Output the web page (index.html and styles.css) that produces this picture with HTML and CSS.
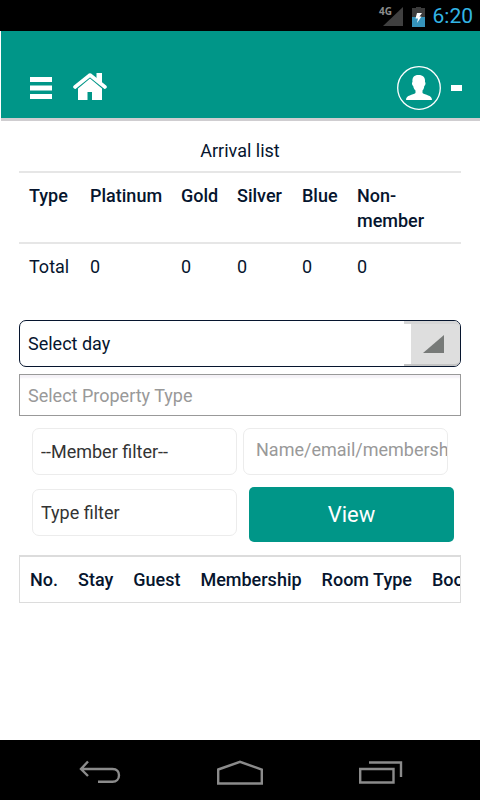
FILE: index.html
```html
<!DOCTYPE html>
<html lang="en">
<head>
<meta charset="utf-8">
<meta name="viewport" content="width=device-width, initial-scale=1">
<title>Arrival list</title>
<link rel="stylesheet" href="styles.css">
</head>
<body>
<div class="status">
  <svg class="signal" width="24" height="24" viewBox="0 0 24 24" aria-hidden="true"><path d="M24 2V21H4z" fill="#404040"/></svg>
  <span class="network">4G</span>
  <svg class="battery" width="13" height="20" viewBox="0 0 13 20" aria-hidden="true"><path d="M0 1H4V0H9V1H13V20H0z" fill="#3c3c3c"/><path d="M0 10H13V20H0z" fill="#3593bb"/><path d="M5 6H10L7.500 9.500H9.500L5 16L6 11.500H3.500z" fill="#fff"/></svg>
  <time class="clock">6:20</time>
</div>
<header class="topbar">
  <nav class="nav">
    <button class="icon-button" aria-label="Menu"><svg width="22" height="24" viewBox="0 0 22 24"><path d="M0 2H22V7H0zM0 10.500H22V15.500H0zM0 19H22V24H0z" fill="#fff"/></svg></button>
    <a class="icon-button" href="#" aria-label="Home"><svg width="34" height="28" viewBox="0 0 34 28"><path d="M2 14L17 2L32 14" fill="none" stroke="#fff" stroke-width="3.600" stroke-linecap="round" stroke-linejoin="round"/><path d="M23.500 0H29V11L23.500 7z" fill="#fff"/><path d="M17 5.500L29 15.500V27H19V19H14.500V27H5V15.500z" fill="#fff"/></svg></a>
  </nav>
  <button class="icon-button account" aria-label="Account"><svg width="44" height="44" viewBox="0 0 44 44"><circle cx="22" cy="22" r="21.300" fill="none" stroke="#fff" stroke-width="1.300"/><path d="M21.500 9C17 9 15 11.500 15.500 16C14.500 16.500 15 19.500 16.200 20C16.500 22 17.500 23.500 18.500 24.500V27C16 29 9 29 9 34H35C35 29 28 29 25.500 27V24.500C26.500 23.500 27 22 27.300 20C28.500 19.500 29 16.500 28 16C28.500 11.500 26 9 21.500 9z" fill="#fff"/></svg><span class="dash"></span></button>
</header>
<main class="content">
  <table class="totals">
    <caption>Arrival list</caption>
    <colgroup><col class="c-type"><col class="c-platinum"><col class="c-gold"><col class="c-silver"><col class="c-blue"><col></colgroup>
    <thead><tr><th>Type</th><th>Platinum</th><th>Gold</th><th>Silver</th><th>Blue</th><th>Non-<br>member</th></tr></thead>
    <tbody><tr><td>Total</td><td>0</td><td>0</td><td>0</td><td>0</td><td>0</td></tr></tbody>
  </table>
  <form class="search">
    <div class="day-wrap">
      <select class="field day" aria-label="Day"><option>Select day</option></select>
      <span class="day-arrow"><svg width="22" height="18" viewBox="0 0 22 18" aria-hidden="true"><path d="M21 0V18H0z" fill="#777a78"/></svg></span>
    </div>
    <input class="field property" type="text" placeholder="Select Property Type" aria-label="Property type">
    <div class="filters">
      <select class="field filter" aria-label="Member filter"><option>--Member filter--</option></select>
      <input class="field filter name" type="text" placeholder="Name/email/membership" aria-label="Name, email or membership">
      <select class="field filter" aria-label="Type filter"><option>Type filter</option></select>
      <button class="view" type="button">View</button>
    </div>
  </form>
  <div class="results">
    <table><thead><tr><th>No.</th><th>Stay</th><th>Guest</th><th>Membership</th><th>Room Type</th><th>Booking</th></tr></thead></table>
  </div>
</main>
<nav class="system">
  <button class="icon-button" aria-label="Back"><svg width="42" height="24" viewBox="0 0 42 24"><path d="M9 1.500L2 9L9 16M2 9H33.500C38 9 40 12 40 15.200C40 19 37.500 21.800 33.500 21.800H19" fill="none" stroke="#8b8b8b" stroke-width="2.400"/></svg></button>
  <button class="icon-button" aria-label="Home screen"><svg width="46" height="25" viewBox="0 0 46 25"><path d="M1.200 9.500L23 1.800L44.800 9.500V23.500H1.200z" fill="none" stroke="#8b8b8b" stroke-width="2.400"/></svg></button>
  <button class="icon-button" aria-label="Recent apps"><svg width="44" height="24" viewBox="0 0 44 24"><path d="M1.200 9H34.500V22.500H1.200zM10 2.500H42V17" fill="none" stroke="#8b8b8b" stroke-width="2.400"/></svg></button>
</nav>
</body>
</html>
```
FILE: styles.css
```css
* { box-sizing: border-box; }
body {
  margin: 0;
  min-height: 100vh;
  display: flex;
  flex-direction: column;
  background: #fff;
  color: #06152e;
  font: 18px/25px Roboto, "Liberation Sans", sans-serif;
}
.status {
  position: relative;
  display: flex;
  justify-content: flex-end;
  align-items: center;
  height: 31px;
  padding: 2px 7px 0;
  background: #000;
}
.network {
  position: absolute;
  right: 88px;
  top: 4px;
  color: #8c8c8c;
  font: bold 10px/14px "Open Sans", sans-serif;
}
.battery { margin: 0 8px 0 9px; }
.clock { color: #33b5e5; font-size: 21px; }
.topbar {
  display: flex;
  justify-content: space-between;
  align-items: flex-end;
  height: 90px;
  margin-left: 1px;
  padding: 0 18px 8px 29px;
  background: #009688;
  border-bottom: 3px solid #cfcdd0;
}
.nav { display: flex; align-items: center; gap: 21px; padding-bottom: 9px; }
.icon-button {
  display: flex;
  align-items: center;
  padding: 0;
  border: 0;
  background: none;
}
.account { gap: 10px; }
.dash { width: 11px; height: 6px; background: #fff; }
.content { flex: 1; padding: 17px 19px 0; }
table { border-collapse: collapse; }
th { text-align: left; font-weight: 500; vertical-align: top; }
.totals { width: 100%; table-layout: fixed; }
.totals caption { padding-bottom: 8px; }
.totals th, .totals td { padding: 10px 10px 9px; border-top: 2px solid #e6e6e6; }
.c-type { width: 61px; }
.c-platinum { width: 91px; }
.c-gold { width: 56px; }
.c-silver { width: 65px; }
.c-blue { width: 55px; }
.search { margin-top: 32px; }
.field {
  display: block;
  width: 100%;
  margin: 0;
  padding: 0 8px;
  background: #fff;
  color: inherit;
  font: inherit;
  outline: 0;
  appearance: none;
}
.field::placeholder { color: #999; opacity: 1; }
.day-wrap { position: relative; }
.day { height: 47px; border: 1px solid #06152e; border-radius: 7px; }
.day-arrow {
  position: absolute;
  top: 1px;
  right: 1px;
  bottom: 1px;
  display: flex;
  align-items: center;
  width: 56px;
  padding-left: 19px;
  background: linear-gradient(to right, #fff 7px, #dedede 7px);
  border-top: 3px solid #d6d6d6;
  border-bottom: 2px solid #c4c4c4;
  border-radius: 0 6px 6px 0;
  pointer-events: none;
}
.property { height: 42px; margin-top: 7px; border: 1px solid #999; box-shadow: inset 0 4px 2px -1px #f5f2f7; }
.filters {
  display: grid;
  grid-template-columns: 1fr 1fr;
  gap: 14px 6px;
  padding: 12px 13px 0;
}
.filter { height: 47px; border: 1px solid #ececec; border-radius: 7px; color: #333; }
.name { padding: 0 0 5px 12px; }
.view {
  height: 55px;
  margin: -2px -6px 0 6px;
  padding: 0;
  border: 0;
  border-radius: 5px;
  background: #009688;
  color: #fff;
  font: 22px/30px Roboto, sans-serif;
}
.results {
  margin-top: 13px;
  overflow: hidden;
  border: 1px solid #dcdcdc;
  border-top-width: 2px;
}
.results th { padding: 10px; white-space: nowrap; }
.system {
  display: flex;
  justify-content: space-between;
  align-items: center;
  height: 60px;
  padding: 4px 77px 0 79px;
  background: #000;
}
```
